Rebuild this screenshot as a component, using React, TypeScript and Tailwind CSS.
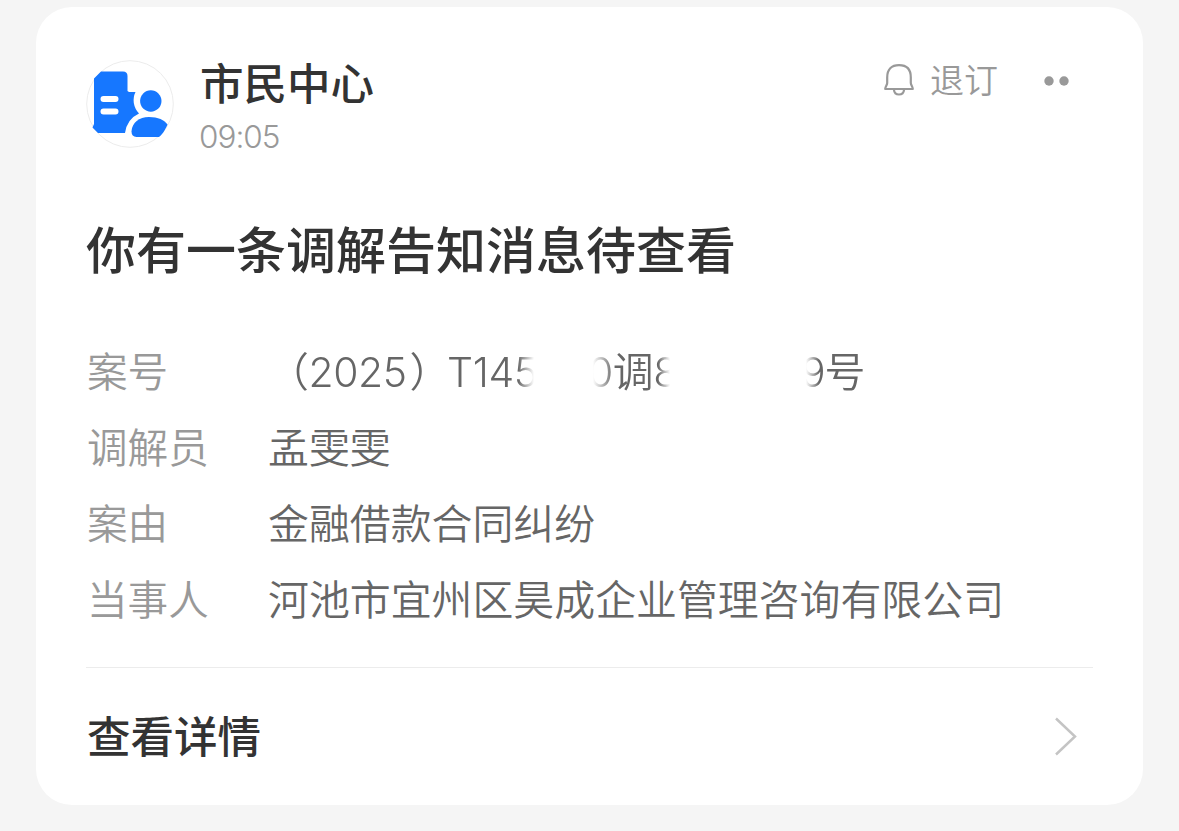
const rows = [
  { label: "调解员", value: "孟雯雯" },
  { label: "案由", value: "金融借款合同纠纷" },
  { label: "当事人", value: "河池市宜州区昊成企业管理咨询有限公司" },
];

function Avatar() {
  return (
    <svg className="h-[88px] w-[88px] shrink-0" viewBox="0 0 88 88" fill="none">
      <circle cx="44" cy="44" r="43.3" fill="#fff" stroke="#ececec" />
      <path
        d="M15 11.5H37Q41.5 11.500 41.5 16V31L43 32H49.500Q47 37 47.800 43Q48.800 49 53 53.500Q41 59 39 73H12L6.500 67.500L8 64V18.500Z"
        fill="#1677ff"
      />
      <path d="M17.5 39H29.5M17.5 51.6H29.5" stroke="#fff" strokeWidth="6" strokeLinecap="round" />
      <circle cx="64.8" cy="41" r="10.7" fill="#1677ff" />
      <path d="M45.500 71.500C46 62.500 53 57 63 57C72 57 78.500 60 81.500 64.500C80 68 77 74 73 77H50.500Q45.500 76.500 45.500 71.500Z" fill="#1677ff" />
    </svg>
  );
}

function BellIcon() {
  return (
    <svg
      className="h-8 w-[30px] shrink-0"
      viewBox="0 0 30 32"
      fill="none"
      stroke="#999"
      strokeWidth="2.2"
      strokeLinejoin="round"
    >
      <path d="M3.200 13.500C3.200 5.500 7.500 1.200 15 1.200S26.800 5.500 26.800 13.500V19C26.800 21 28.800 22.500 28.800 25H1.200C1.200 22.500 3.200 21 3.200 19Z" />
      <path d="M10 26C10.500 32 19.500 32 20 26" />
    </svg>
  );
}

function Row({ label, children }: { label: string; children: React.ReactNode }) {
  return (
    <div className="flex h-[76px] items-center pl-px font-[350] whitespace-nowrap">
      <dt className="w-[181px] text-[40.6px] text-[#999]">{label}</dt>
      <dd className="text-[40.9px] text-[#666]">{children}</dd>
    </div>
  );
}

// Digits of the case number are partly hidden, the edges fade out
function CaseNumber() {
  return (
    <span className="flex">
      <span className="w-[280px] tracking-[-0.4px] [mask-image:linear-gradient(to_right,#000_250px,transparent_266px)]">
        （2025<span className="mr-[-3px] ml-[3px]">）</span>T145
      </span>
      <span className="ml-[40px] w-[96px] tracking-[-0.5px] [mask-image:linear-gradient(to_right,transparent_5px,#000_26px,#000_70px,transparent_82px)]">
        0调8
      </span>
      <span className="ml-[117px] tracking-[-1px] [mask-image:linear-gradient(to_right,transparent_5px,#000_18px)]">
        9号
      </span>
    </span>
  );
}

export default function App() {
  return (
    <div className="h-[831px] w-[1179px] bg-[#f5f5f5] px-9 pt-[7px] font-[Inter,'Noto_Sans_CJK_SC',sans-serif]">
      <main className="flex h-[798px] w-[1107px] flex-col rounded-[36px] bg-white px-[50px]">
        <header className="flex h-[200px] shrink-0 pt-[53px]">
          <Avatar />
          <div className="ml-[26px] whitespace-nowrap">
            <h1 className="text-[43.5px] leading-[48px] font-medium text-[#333]">市民中心</h1>
            <p className="mt-[9px] -ml-px text-[31.5px] leading-[40px] font-[350] tracking-[-1px] text-[#999]">09:05</p>
          </div>
          <div className="mt-0.5 ml-auto flex h-9 items-center pr-[24px]">
            <BellIcon />
            <span className="ml-4 text-[34px] font-[350] text-[#999]">退订</span>
            <svg className="ml-[46px] h-3 w-[25px]" viewBox="0 0 25 12" fill="#999">
              <circle cx="5" cy="7" r="4.700" />
              <circle cx="20" cy="7" r="4.700" />
            </svg>
          </div>
        </header>
        <h2 className="h-[128px] shrink-0 text-[50px] leading-[88px] font-medium text-[#333]">
          你有一条调解告知消息待查看
        </h2>
        <dl className="h-[332px] shrink-0">
          <Row label="案号">
            <CaseNumber />
          </Row>
          {rows.map((row) => (
            <Row key={row.label} label={row.label}>
              {row.value}
            </Row>
          ))}
        </dl>
        <footer className="flex h-[138px] items-center justify-between border-t border-[#ececec] pr-[15px] pl-px">
          <span className="pt-[3px] text-[43.5px] font-medium text-[#333]">查看详情</span>
          <svg className="h-10 w-6" viewBox="0 0 24 40" fill="none" stroke="#c4c4c4" strokeWidth="2.500">
            <path d="M2 1.500L21 19.500L2 37.500" />
          </svg>
        </footer>
      </main>
    </div>
  );
}
